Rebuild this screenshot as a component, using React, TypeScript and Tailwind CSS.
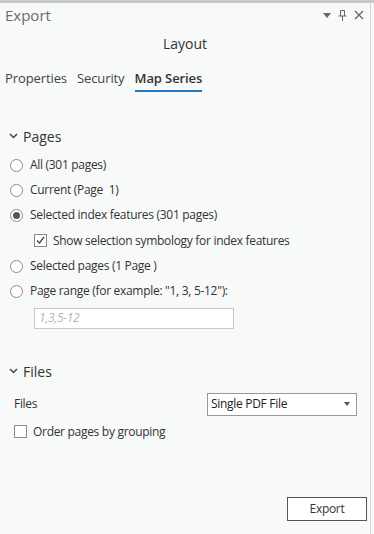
import React from "react";

const Radio = ({ checked = false }: { checked?: boolean }) => (
  <span className="flex h-[13px] w-[13px] shrink-0 items-center justify-center rounded-full border border-[#8a8a8a] bg-white">
    {checked && <span className="h-[7px] w-[7px] rounded-full bg-[#555]" />}
  </span>
);

const Check = ({ checked = false }: { checked?: boolean }) => (
  <span className="flex h-[13px] w-[13px] shrink-0 items-center justify-center border border-[#8a8a8a] bg-white">
    {checked && (
      <svg width="9" height="9" viewBox="0 0 9 9">
        <path d="M1 4.5 L3.5 7 L8 1" fill="none" stroke="#444" strokeWidth="1.3" />
      </svg>
    )}
  </span>
);

const Chevron = () => (
  <svg width="9" height="6" viewBox="0 0 9 6" className="shrink-0">
    <path d="M1 1 L4.5 4.5 L8 1" fill="none" stroke="#444" strokeWidth="1.5" />
  </svg>
);

const RadioRow = ({ label, checked }: { label: string; checked?: boolean }) => (
  <div className="flex h-[25px] items-center gap-[7px] pl-[10px]">
    <Radio checked={checked} />
    <span className="whitespace-pre">{label}</span>
  </div>
);

export default function App() {
  return (
    <div
      className="flex h-[534px] w-[374px] flex-col bg-[#f8f9f9] text-[12px] tracking-[-0.3px] text-[#333] border-t-[3px] border-[#c9c9c9]"
      style={{ fontFamily: '"Open Sans", "Noto Sans", sans-serif' }}
    >
      <div className="flex flex-1 flex-col border-r border-[#d4d4d4] mr-[3px]">
        <div className="flex h-[24px] items-center justify-between pl-[5px] pr-[6px]">
          <span className="text-[15px] tracking-normal text-[#6a6a6a]">Export</span>
          <div className="flex items-center gap-[7px] text-[#666]">
            <svg width="8" height="5" viewBox="0 0 8 5">
              <path d="M0 0 H8 L4 5 Z" fill="#666" />
            </svg>
            <svg width="9" height="11" viewBox="0 0 9 11">
              <path d="M2.5 0.5 V6 M6.5 0.5 V6 M2.5 0.5 H6.5 M0.5 6 H8.5 M4.5 6 V11" fill="none" stroke="#666" strokeWidth="1" />
            </svg>
            <svg width="10" height="10" viewBox="0 0 10 10">
              <path d="M1 1 L9 9 M9 1 L1 9" stroke="#666" strokeWidth="1.3" />
            </svg>
          </div>
        </div>

        <div className="mt-[6px] text-center text-[14px] tracking-normal text-[#333]">Layout</div>

        <div className="mt-[15px] flex items-end gap-[10px] pl-[5px] text-[13px] tracking-[-0.1px]">
          <span className="pb-[3px] text-[#444]">Properties</span>
          <span className="pb-[3px] text-[#444]">Security</span>
          <span className="border-b-2 border-[#1a7ac5] pb-[1px] font-semibold text-[#333]">Map Series</span>
        </div>

        <div className="mt-[34px] flex items-center gap-[5px] pl-[9px]">
          <Chevron />
          <span className="text-[14px] tracking-normal">Pages</span>
        </div>

        <div className="mt-[6px] flex flex-col">
          <RadioRow label="All (301 pages)" />
          <RadioRow label="Current (Page  1)" />
          <RadioRow label="Selected index features (301 pages)" checked />
          <div className="flex h-[26px] items-center gap-[6px] pl-[34px]">
            <Check checked />
            <span>Show selection symbology for index features</span>
          </div>
          <RadioRow label="Selected pages (1 Page )" />
          <RadioRow label={'Page range (for example: "1, 3, 5-12"):'} />
          <div className="mt-[4px] pl-[34px]">
            <div className="flex h-[21px] w-[200px] items-center border border-[#c8c8c8] bg-white px-[4px] italic text-[#b5b5b5]">
              1,3,5-12
            </div>
          </div>
        </div>

        <div className="mt-[32px] flex items-center gap-[5px] pl-[9px]">
          <Chevron />
          <span className="text-[14px] tracking-normal">Files</span>
        </div>

        <div className="mt-[11px] flex items-center justify-between pl-[14px] pr-[13px]">
          <span>Files</span>
          <div className="flex h-[23px] w-[150px] items-center justify-between border border-[#9a9a9a] bg-white pl-[3px] pr-[6px]">
            <span className="text-[#222]">Single PDF File</span>
            <svg width="6" height="4" viewBox="0 0 6 4">
              <path d="M0 0 H6 L3 4 Z" fill="#555" />
            </svg>
          </div>
        </div>

        <div className="mt-[7px] flex items-center gap-[6px] pl-[14px]">
          <Check />
          <span>Order pages by grouping</span>
        </div>

        <div className="mt-auto mb-[13px] flex justify-end pr-[3px]">
          <button className="h-[24px] w-[80px] border border-[#555] bg-white text-[12px] text-[#333]">
            Export
          </button>
        </div>
      </div>
    </div>
  );
}
